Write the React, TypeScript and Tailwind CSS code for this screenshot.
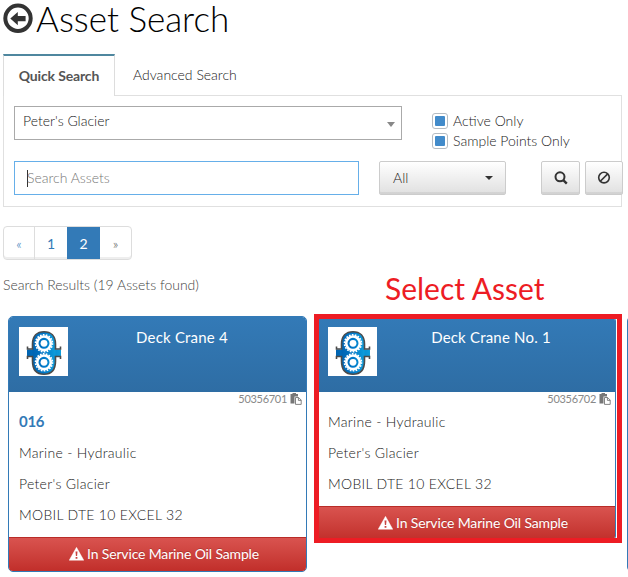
import { useState } from "react";
import clsx from "clsx";

type Asset = {
  id: string;
  name: string;
  code?: string;
  details: string[];
};

const ASSETS: Asset[] = [
  {
    id: "50356701",
    name: "Deck Crane 4",
    code: "016",
    details: ["Marine - Hydraulic", "Peter's Glacier", "MOBIL DTE 10 EXCEL 32"],
  },
  {
    id: "50356702",
    name: "Deck Crane No. 1",
    details: ["Marine - Hydraulic", "Peter's Glacier", "MOBIL DTE 10 EXCEL 32"],
  },
];

function BackIcon() {
  return (
    <svg width="30" height="30" viewBox="0 0 30 30" className="mt-[3px] shrink-0">
      <circle cx="15" cy="15.3" r="12.7" fill="none" stroke="#333" strokeWidth="4" />
      <path d="M7.3 15.6L14.8 9V13H22.6V18.2H14.8V22.2Z" fill="#333" />
    </svg>
  );
}

function SearchIcon() {
  return (
    <svg width="14" height="14" viewBox="0 0 14 14">
      <circle cx="6" cy="5.8" r="4.5" fill="none" stroke="#333" strokeWidth="2" />
      <path d="M9.3 9.1L12.8 12.6" stroke="#333" strokeWidth="2.4" />
    </svg>
  );
}

function BanIcon() {
  return (
    <svg width="14" height="14" viewBox="0 0 14 14">
      <circle cx="7" cy="6.6" r="5.3" fill="none" stroke="#333" strokeWidth="1.6" />
      <path d="M3.3 10.3L10.7 2.9" stroke="#333" strokeWidth="1.6" />
    </svg>
  );
}

function PasteIcon() {
  return (
    <svg width="12" height="12" viewBox="0 0 12 12">
      <path d="M0.5 1H2.5V0H6V1H8V3.5H4.5V10.5H0.5Z" fill="#777" />
      <path d="M5.5 4.5H8.6L11.2 7.1V11.4H5.5Z" fill="#fff" stroke="#777" strokeWidth="0.9" />
      <path d="M8.4 4.5V7.4H11.2" fill="none" stroke="#777" strokeWidth="0.9" />
    </svg>
  );
}

function WarningIcon() {
  return (
    <svg width="15" height="14" viewBox="0 0 15 14" className="-mt-0.5">
      <path d="M7.5 0.3L14.8 13.3H0.2Z" fill="#fff" stroke="#fff" strokeWidth="0.4" strokeLinejoin="round" />
      <path d="M6.5 4.6H8.5L8.1 9H6.9Z M6.6 10H8.4V11.7H6.6Z" fill="#c9423f" />
    </svg>
  );
}

function Gear({ cy }: { cy: number }) {
  return (
    <g fill="none" stroke="#fff">
      <circle cx="25" cy={cy} r="8.5" strokeWidth="1.6" strokeDasharray="1.7 1.27" />
      <circle cx="25" cy={cy} r="6.8" strokeWidth="2.6" />
      <circle cx="25" cy={cy} r="3.4" fill="#fff" stroke="none" />
    </g>
  );
}

function PumpLogo() {
  return (
    <svg width="49" height="49" viewBox="0 0 49 49" className="bg-white">
      <defs>
        <linearGradient id="pump" x1="0" x2="1">
          <stop offset="0" stopColor="#0063b1" />
          <stop offset="0.5" stopColor="#0078c8" />
          <stop offset="1" stopColor="#0d9ddb" />
        </linearGradient>
      </defs>
      <path d="M8 22.5H42V29.5H8Z" fill="url(#pump)" />
      <path
        d="M13.5 21V17C13.5 9 18 4.8 25 4.8S36.5 9 36.5 17V34C36.5 43 32 47.2 25 47.2S13.5 43 13.5 34Z"
        fill="url(#pump)"
      />
      <g fill="none" stroke="#4b4b4b" strokeWidth="1.6">
        <path d="M8.5 19.5V22H13.5V17C13.5 9 18 4.8 25 4.8S36.5 9 36.5 17V22H41.5V19.5" />
        <path d="M8.5 32V29.5H13.5V34C13.5 43 18 47.2 25 47.2S36.5 43 36.5 34V29.5H41.5V32" />
      </g>
      <Gear cy={16.3} />
      <Gear cy={35.3} />
    </svg>
  );
}

function Checkbox({ label }: { label: string }) {
  const [checked, setChecked] = useState(true);
  return (
    <label className="flex h-5 items-center">
      <input type="checkbox" className="sr-only" checked={checked} onChange={() => setChecked(!checked)} />
      <span className="flex h-4 w-4 items-center justify-center rounded-[3px] border border-[#b5bcc2] bg-white">
        {checked && <span className="h-2.5 w-2.5 rounded-[1px] bg-[#428bca]" />}
      </span>
      <span className="ml-[5px] whitespace-nowrap">{label}</span>
    </label>
  );
}

function AssetCard({ asset }: { asset: Asset }) {
  return (
    <div className="w-[299px] shrink-0 overflow-hidden rounded-[5px] border border-[#337ab7] bg-white">
      <div className="relative h-[75px] bg-linear-to-b from-[#337ab7] to-[#2e6da4] pt-2.5 pl-2.5">
        <PumpLogo />
        <h3 className="absolute top-[9px] right-0 left-[49px] text-center text-[15px] leading-[22px] font-normal tracking-[0.2px] text-white">
          {asset.name}
        </h3>
      </div>
      <div className="flex h-[14px] items-center justify-end gap-[3px] pr-1 text-[11px] tracking-[-0.3px] text-[#888]">
        <span className="font-normal">{asset.id}</span>
        <PasteIcon />
      </div>
      <div className="pb-[7px] pl-2.5">
        {asset.code && (
          <p className="h-[31px] text-[15px] leading-[31px] font-bold tracking-[-0.3px] text-[#337ab7]">{asset.code}</p>
        )}
        {asset.details.map((line) => (
          <p key={line} className="h-[31px] leading-[31px] tracking-[0.3px] text-[#222]">
            {line}
          </p>
        ))}
      </div>
      <div className="flex h-[34px] items-center justify-center gap-[3px] border-t border-[#b92c28] bg-linear-to-b from-[#d9534f] to-[#c12e2a] pl-[13px] text-white [text-shadow:0_-1px_0_rgba(0,0,0,0.2)]">
        <WarningIcon />
        <span className="-mt-0.5 font-normal tracking-[-0.15px]">In Service Marine Oil Sample</span>
      </div>
    </div>
  );
}

const BUTTON =
  "flex h-[34px] items-center rounded-[2px] border border-[#ccc] bg-linear-to-b from-white to-[#e0e0e0] shadow-[inset_0_-2px_0_rgba(0,0,0,0.06)]";

export default function App() {
  return (
    <div className="h-[577px] w-[628px] overflow-hidden bg-white font-['Lato',sans-serif] text-sm font-light text-[#222]">
      <header className="flex h-[54px] items-start pl-[3px]">
        <BackIcon />
        <h1 className="ml-[3px] text-[35px] leading-9 font-light text-black">Asset Search</h1>
      </header>

      <nav className="flex h-[41px] pl-[3px]">
        <button className="relative z-10 h-[42px] w-28 border-x border-t-2 border-x-[#ddd] border-t-[#4f879f] bg-white text-center font-bold tracking-[-0.15px] text-[#555]">
          Quick Search
        </button>
        <button className="ml-[18px]">Advanced Search</button>
      </nav>

      <section className="ml-[3px] h-[112px] w-[619px] border border-[#e0e0e0] pt-2.5 pl-2.5">
        <div className="flex h-[55px]">
          <div className="flex h-[34px] w-[388px] justify-between border border-[#aaa] pr-1.5 pl-2">
            <span className="leading-7">Peter's Glacier</span>
            <span className="mt-[15px] h-0 border-x-4 border-t-5 border-x-transparent border-t-[#888]" />
          </div>
          <div className="ml-[30px] pt-[5px]">
            <Checkbox label="Active Only" />
            <Checkbox label="Sample Points Only" />
          </div>
        </div>
        <div className="flex w-[609px]">
          <div className="flex h-[34px] w-[345px] items-center border border-[#66afe9] pl-3 text-[#777]">
            <span className="h-[17px] w-px bg-[#333]" />
            <span className="-ml-px">Search Assets</span>
          </div>
          <button className={clsx(BUTTON, "ml-5 w-[127px] justify-between pr-3 pl-[13px]")}>
            <span>All</span>
            <span className="h-0 border-x-4 border-t-4 border-x-transparent border-t-[#333]" />
          </button>
          <button aria-label="Search" className={clsx(BUTTON, "ml-[35px] w-[39px] justify-center")}>
            <SearchIcon />
          </button>
          <button aria-label="Clear" className={clsx(BUTTON, "ml-[5px] w-[38px] justify-center")}>
            <BanIcon />
          </button>
        </div>
      </section>

      <div className="mt-[19px] ml-[3px] flex h-[34px] w-[129px] overflow-hidden rounded-[4px] border border-[#ddd] text-center leading-[31px] text-[#337ab7] shadow-[inset_0_-2px_0_#eee]">
        <button className="w-[31px] border-r border-[#ddd]">«</button>
        <button className="w-8 font-normal">1</button>
        <button className="-my-px w-[33px] bg-[#337ab7] font-normal text-white">2</button>
        <button className="flex-1 text-[#555]">»</button>
      </div>

      <p className="mt-[15px] ml-[3px] h-5 leading-5 text-[#444]">Search Results (19 Assets found)</p>

      <main className="relative mt-[21px] flex items-start gap-2.5 pl-2">
        {ASSETS.map((asset) => (
          <AssetCard key={asset.id} asset={asset} />
        ))}
        <div className="ml-px h-64 w-[299px] shrink-0 rounded-[5px] border border-[#337ab7]" />
        <div className="absolute -top-0.5 left-[314px] h-[229px] w-[308px] border-5 border-[#ed1c24]" />
        <p className="absolute -top-[46px] left-[385px] text-[30px] leading-9 font-normal whitespace-nowrap text-[#ed1c24]">
          Select Asset
        </p>
      </main>
    </div>
  );
}
